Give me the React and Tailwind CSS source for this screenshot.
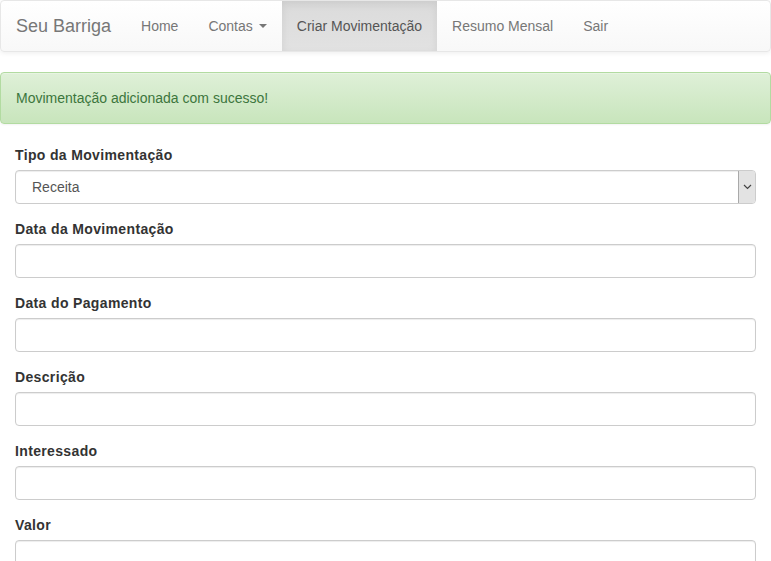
import React from "react";

const fields = [
  "Data da Movimentação",
  "Data do Pagamento",
  "Descrição",
  "Interessado",
  "Valor",
];

const NavLink = ({ children, active }) => (
  <a
    href="#"
    className={`flex items-center h-[50px] px-[15px] text-[14px] ${
      active
        ? "text-[#555] bg-gradient-to-b from-[#dbdbdb] to-[#e2e2e2] shadow-[inset_0_3px_9px_rgba(0,0,0,0.075)]"
        : "text-[#777]"
    }`}
  >
    {children}
  </a>
);

export default function App() {
  return (
    <div className="min-h-[561px] bg-white text-[#333] text-[14px] leading-[20px] font-['Liberation_Sans',Arial,sans-serif]">
      <nav className="flex items-center h-[52px] border border-[#e7e7e7] rounded-[4px] bg-gradient-to-b from-white to-[#f8f8f8] shadow-[0_1px_5px_rgba(0,0,0,0.075)]">
        <a href="#" className="h-[50px] flex items-center px-[15px] text-[18px] text-[#777]">
          Seu Barriga
        </a>
        <NavLink>Home</NavLink>
        <NavLink>
          Contas
          <span className="ml-[6px] inline-block w-0 h-0 border-x-[4px] border-x-transparent border-t-[4px] border-t-[#777]" />
        </NavLink>
        <NavLink active>Criar Movimentação</NavLink>
        <NavLink>Resumo Mensal</NavLink>
        <NavLink>Sair</NavLink>
      </nav>

      <div className="mt-[20px] mb-[21px] h-[52px] flex items-center px-[15px] border border-[#b2dba1] rounded-[4px] bg-gradient-to-b from-[#dff0d8] to-[#c8e5bc] text-[#3c763d] shadow-[inset_0_1px_0_rgba(255,255,255,0.25),0_1px_2px_rgba(0,0,0,0.05)]">
        Movimentação adicionada com sucesso!
      </div>

      <form className="px-[15px]">
        <div className="mb-[15px]">
          <label className="block font-bold mb-[5px] tracking-[0.35px]">Tipo da Movimentação</label>
          <div className="flex h-[34px] border border-[#ccc] rounded-[4px] shadow-[inset_0_1px_1px_rgba(0,0,0,0.075)] overflow-hidden">
            <div className="flex-1 flex items-center pl-[16px] text-[#555]">Receita</div>
            <div className="w-[17px] flex items-center justify-center bg-[#e3e3e3] border-l border-[#a9a9a9]">
              <svg width="9" height="6" viewBox="0 0 9 6">
                <path d="M1 1 L4.5 4.5 L8 1" fill="none" stroke="#444" strokeWidth="1.2" />
              </svg>
            </div>
          </div>
        </div>

        {fields.map((f) => (
          <div key={f} className="mb-[15px]">
            <label className="block font-bold mb-[5px] tracking-[0.35px]">{f}</label>
            <input
              type="text"
              className="block w-full h-[34px] px-[12px] border border-[#ccc] rounded-[4px] shadow-[inset_0_1px_1px_rgba(0,0,0,0.075)] outline-none"
            />
          </div>
        ))}
      </form>
    </div>
  );
}
